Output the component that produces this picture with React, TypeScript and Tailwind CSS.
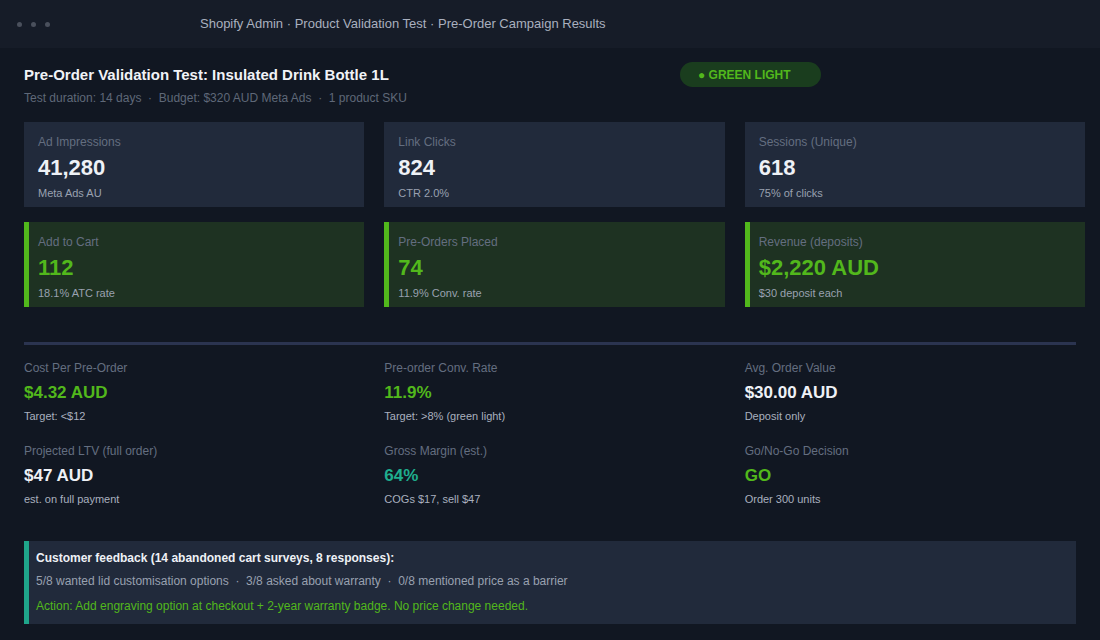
export default function App() {
  const f = { fontFamily: '"Liberation Sans", Arial, sans-serif' };
  const top = [
    ["Ad Impressions", "41,280", "Meta Ads AU"],
    ["Link Clicks", "824", "CTR 2.0%"],
    ["Sessions (Unique)", "618", "75% of clicks"],
  ];
  const green = [
    ["Add to Cart", "112", "18.1% ATC rate"],
    ["Pre-Orders Placed", "74", "11.9% Conv. rate"],
    ["Revenue (deposits)", "$2,220 AUD", "$30 deposit each"],
  ];
  const stats: [string, string, string, string][] = [
    ["Cost Per Pre-Order", "$4.32 AUD", "Target: <$12", "text-[#52b81c]"],
    ["Pre-order Conv. Rate", "11.9%", "Target: >8% (green light)", "text-[#52b81c]"],
    ["Avg. Order Value", "$30.00 AUD", "Deposit only", "text-[#eef1f6]"],
    ["Projected LTV (full order)", "$47 AUD", "est. on full payment", "text-[#eef1f6]"],
    ["Gross Margin (est.)", "64%", "COGs $17, sell $47", "text-[#1fae8e]"],
    ["Go/No-Go Decision", "GO", "Order 300 units", "text-[#52b81c]"],
  ];
  return (
    <div style={f} className="w-[1100px] h-[640px] bg-[#111722] overflow-hidden">
      <div className="h-[48px] bg-[#161c28] flex items-center">
        <div className="flex gap-[9px] pl-[17px] w-[200px]">
          <span className="w-[5px] h-[5px] rounded-full bg-[#4a505c]" />
          <span className="w-[5px] h-[5px] rounded-full bg-[#4a505c]" />
          <span className="w-[5px] h-[5px] rounded-full bg-[#4a505c]" />
        </div>
        <div className="text-[13px] text-[#a9b0bf]">Shopify Admin · Product Validation Test · Pre-Order Campaign Results</div>
      </div>
      <div className="px-6 pt-[14px]">
        <div className="flex">
          <div className="w-[656px]">
            <div className="text-[15px] font-bold text-[#f1f3f7] mt-[4px] leading-[18px]">Pre-Order Validation Test: Insulated Drink Bottle 1L</div>
            <div className="text-[12px] text-[#5f6878] mt-[5px]">Test duration: 14 days &nbsp;·&nbsp; Budget: $320 AUD Meta Ads &nbsp;·&nbsp; 1 product SKU</div>
          </div>
          <div className="w-[141px] h-[25px] rounded-full bg-[#1a3d1e] text-[#52b81c] text-[12px] font-bold flex items-center pl-[18px]">● GREEN LIGHT</div>
        </div>
        <div className="grid grid-cols-3 gap-x-5 gap-y-[15px] w-[1061px] mt-[15px]">
          {top.map(([a, b, c]) => (
            <div key={a} className="h-[85px] bg-[#212a3b] px-[14px] pt-[11px]">
              <div className="text-[12px] text-[#646e80]">{a}</div>
              <div className="text-[22px] font-bold text-[#eef1f6] mt-[4px] leading-[26px]">{b}</div>
              <div className="text-[11px] text-[#99a1b0] mt-[4px]">{c}</div>
            </div>
          ))}
          {green.map(([a, b, c]) => (
            <div key={a} className="h-[85px] bg-[#1e3222] border-l-[5px] border-[#52b81c] pl-[9px] pt-[11px]">
              <div className="text-[12px] text-[#646e80]">{a}</div>
              <div className="text-[22px] font-bold text-[#52b81c] mt-[4px] leading-[26px]">{b}</div>
              <div className="text-[11px] text-[#99a1b0] mt-[4px]">{c}</div>
            </div>
          ))}
        </div>
        <div className="h-[3px] bg-[#2b3450] mt-[35px] w-[1052px]" />
        <div className="grid grid-cols-3 gap-x-5 gap-y-[17px] w-[1061px] mt-[14px]">
          {stats.map(([a, b, c, cl]) => (
            <div key={a}>
              <div className="text-[12px] text-[#646e80]">{a}</div>
              <div className={`text-[17px] font-bold mt-[6px] leading-[20px] ${cl}`}>{b}</div>
              <div className="text-[11px] text-[#a9b0bf] mt-[5px]">{c}</div>
            </div>
          ))}
        </div>
        <div className="mt-[34px] w-[1052px] h-[83px] bg-[#212a3b] border-l-[5px] border-[#1fa58a] pl-[7px] pt-[8px]">
          <div className="text-[12px] font-bold text-[#eef1f6]">Customer feedback (14 abandoned cart surveys, 8 responses):</div>
          <div className="text-[12px] text-[#99a1b0] mt-[5px]">5/8 wanted lid customisation options &nbsp;·&nbsp; 3/8 asked about warranty &nbsp;·&nbsp; 0/8 mentioned price as a barrier</div>
          <div className="text-[12px] text-[#52b81c] mt-[7px]">Action: Add engraving option at checkout + 2-year warranty badge. No price change needed.</div>
        </div>
      </div>
    </div>
  );
}
